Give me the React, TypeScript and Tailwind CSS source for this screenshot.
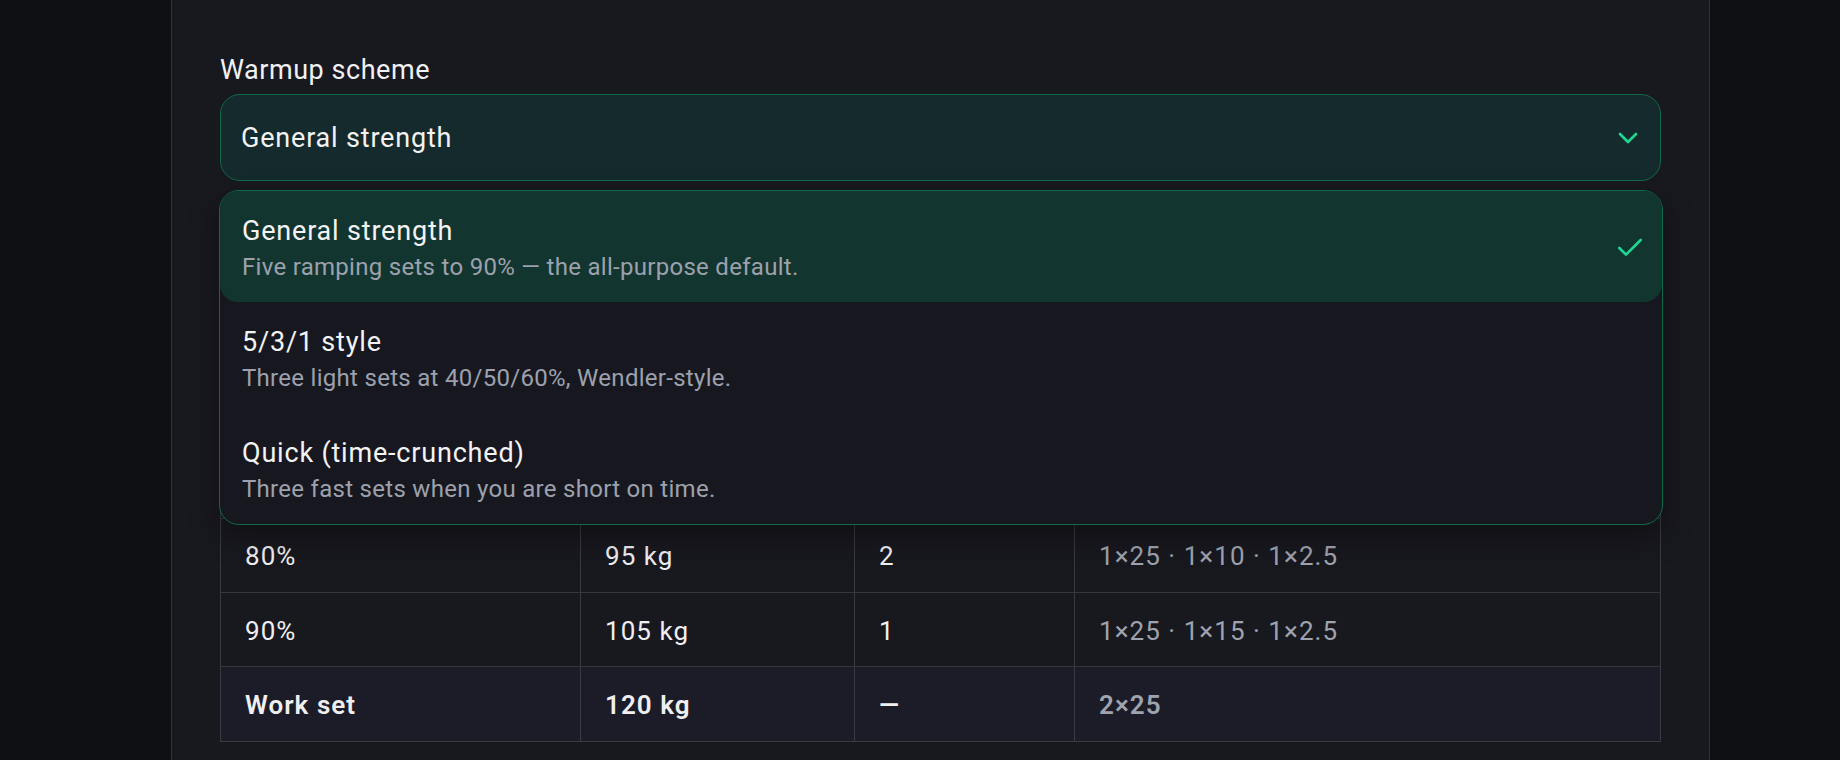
import { Check, ChevronDown } from 'lucide-react'

type Scheme = { id: string; name: string; blurb: string }

const schemes: Scheme[] = [
  { id: 'general', name: 'General strength', blurb: 'Five ramping sets to 90% — the all-purpose default.' },
  { id: '531', name: '5/3/1 style', blurb: 'Three light sets at 40/50/60%, Wendler-style.' },
  { id: 'quick', name: 'Quick (time-crunched)', blurb: 'Three fast sets when you are short on time.' },
]

type Row = { pct: string; weight: string; reps: string; plates: string; work?: boolean }

// bar is 20 kg, plates are per side
const rows: Row[] = [
  { pct: '50%', weight: '60 kg', reps: '5', plates: '1×20' },
  { pct: '60%', weight: '70 kg', reps: '5', plates: '1×25' },
  { pct: '70%', weight: '85 kg', reps: '3', plates: '1×25 · 1×5 · 1×2.5' },
  { pct: '80%', weight: '95 kg', reps: '2', plates: '1×25 · 1×10 · 1×2.5' },
  { pct: '90%', weight: '105 kg', reps: '1', plates: '1×25 · 1×15 · 1×2.5' },
  { pct: 'Work set', weight: '120 kg', reps: '—', plates: '2×25', work: true },
]

function SchemeOption({ scheme, selected }: { scheme: Scheme; selected: boolean }) {
  return (
    <div
      className={
        selected
          ? 'flex items-center rounded-[18px] bg-[#13352f] pt-[23px] pb-[20px] pl-[22px] pr-[16px]'
          : 'flex items-center rounded-[18px] pt-[23px] pb-[20px] pl-[22px] pr-[16px]'
      }
    >
      <div className="flex min-w-0 flex-1 flex-col gap-[4px]">
        <span className="text-[27px] leading-[34px] tracking-[0.03em] text-[#f3f3f4]">{scheme.name}</span>
        <span className="text-[24px] leading-[30px] tracking-[0.012em] text-[#9ca1ad]">{scheme.blurb}</span>
      </div>
      {selected && <Check size={32} strokeWidth={2} className="shrink-0 text-[#1fd693]" />}
    </div>
  )
}

export default function App() {
  const current = schemes[0]

  return (
    <div className="h-[760px] w-full overflow-hidden bg-[#0e0f12] font-['Roboto',sans-serif]">
      <div className="ml-[171px] min-h-[760px] w-[1539px] border-x border-[#0f4331] bg-[#18181f] px-[48px] pt-[52px]">
        <label className="mb-[6px] block text-[27px] leading-[36px] tracking-[0.02em] text-[#f1f1f3]">
          Warmup scheme
        </label>

        <div className="relative z-10">
          <button className="flex h-[87px] w-full items-center rounded-[20px] border-[1.5px] border-[#0f6a4a] bg-[#152a2c] pl-[20px] pr-[16px] text-left">
            <span className="flex-1 pt-[1px] text-[27px] leading-[36px] tracking-[0.03em] text-[#f2f2f3]">
              {current.name}
            </span>
            <ChevronDown size={32} strokeWidth={2} className="text-[#1fd693]" />
          </button>

          {/* open menu, floats over the table below */}
          <div className="absolute top-[calc(100%+9px)] -left-px -right-[2px] flex flex-col rounded-[20px] border-[1.5px] border-[#0f6a4a] bg-[#17181f] shadow-[0_12px_30px_rgba(0,0,0,0.35)]">
            {schemes.map((scheme) => (
              <SchemeOption key={scheme.id} scheme={scheme} selected={scheme.id === current.id} />
            ))}
          </div>
        </div>

        <div className="mt-[39.5px] border-x border-t border-[#3a3b42] text-[26px] tracking-[0.04em]">
          <div className="grid h-[74.3px] grid-cols-[360px_274px_220px_1fr] border-b border-[#35363d] text-[#9ca1ad]">
            <div className="flex items-center border-r border-[#3a3b42] px-[24px]">Set</div>
            <div className="flex items-center border-r border-[#3a3b42] px-[24px]">Weight</div>
            <div className="flex items-center border-r border-[#3a3b42] px-[24px]">Reps</div>
            <div className="flex items-center px-[24px]">Plates / side</div>
          </div>
          {rows.map((row) => (
            <div
              key={row.pct}
              className={
                row.work
                  ? 'grid h-[74.3px] grid-cols-[360px_274px_220px_1fr] border-b border-[#3a3b42] bg-[#1b1c28] font-semibold'
                  : 'grid h-[74.3px] grid-cols-[360px_274px_220px_1fr] border-b border-[#35363d]'
              }
            >
              <div className="flex items-center border-r border-[#3a3b42] px-[24px] pt-[3px] text-[#efeff1]">{row.pct}</div>
              <div className="flex items-center border-r border-[#3a3b42] px-[24px] pt-[3px] text-[#efeff1]">{row.weight}</div>
              <div className="flex items-center border-r border-[#3a3b42] px-[24px] pt-[3px] text-[#efeff1]">{row.reps}</div>
              <div className="flex items-center px-[24px] pt-[3px] text-[#9fa3ae]">{row.plates}</div>
            </div>
          ))}
        </div>
      </div>
    </div>
  )
}
